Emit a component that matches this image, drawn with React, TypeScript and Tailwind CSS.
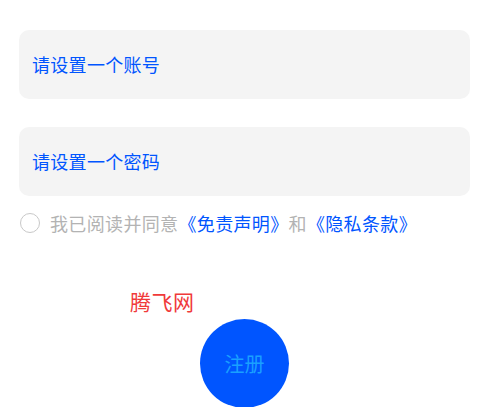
import { useState } from 'react'

const font = '"Noto Sans CJK SC", "Noto Sans", sans-serif'

export default function App() {
  const [agreed, setAgreed] = useState(false)

  return (
    <main
      className="min-h-[407px] w-full overflow-hidden bg-white px-[19px] pt-[30px]"
      style={{ fontFamily: font }}
    >
      <div className="flex h-[69px] items-center rounded-[10px] bg-[#f4f4f4] pl-[13px]">
        <input
          placeholder="请设置一个账号"
          className="w-full bg-transparent text-[18px] tracking-[0.3px] text-[#0055ff] outline-none placeholder:text-[#0055ff]"
        />
      </div>

      <div className="mt-[28px] flex h-[69px] items-center rounded-[10px] bg-[#f4f4f4] pl-[13px]">
        <input
          type="password"
          placeholder="请设置一个密码"
          className="w-full bg-transparent text-[18px] tracking-[0.3px] text-[#0055ff] outline-none placeholder:text-[#0055ff]"
        />
      </div>

      <label className="mt-[15px] flex h-[24px] items-center">
        <button
          type="button"
          onClick={() => setAgreed(!agreed)}
          className={`ml-px size-[20px] shrink-0 rounded-full border-[1.5px] border-[#c8c8c8] ${
            agreed ? 'bg-[#0055ff]' : 'bg-white'
          }`}
        />
        <span className="ml-[10px] text-[18px] leading-[24px] tracking-[0.35px] text-[#b3b3b3]">
          我已阅读并同意
          <span className="text-[#0055ff]">《免责声明》</span>和
          <span className="text-[#0055ff]">《隐私条款》</span>
        </span>
      </label>

      <p className="ml-[111px] mt-[54px] text-[21px] leading-[24px] tracking-[0.5px] text-[#f03a3a]">
        腾飞网
      </p>

      <div className="mt-[6px] flex justify-center">
        <button
          type="button"
          className="flex size-[89px] items-center justify-center rounded-full bg-[#0055ff] text-[20px] text-[#1aa0ff]"
        >
          注册
        </button>
      </div>
    </main>
  )
}
